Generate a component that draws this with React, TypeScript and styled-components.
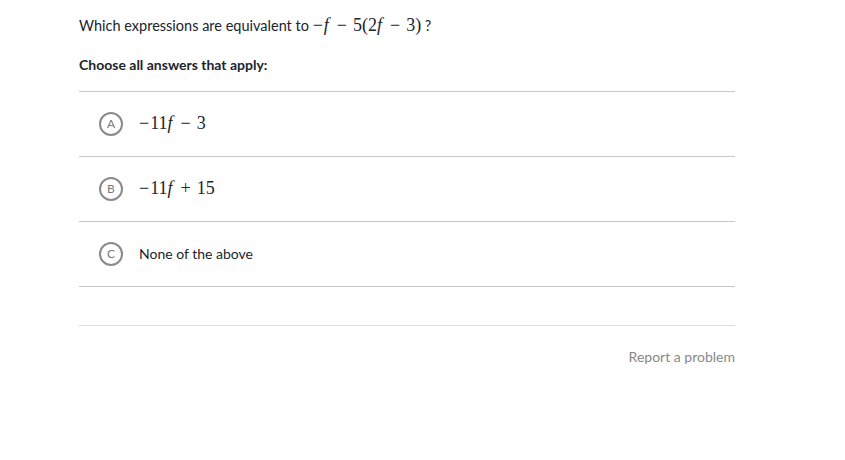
import styled, { createGlobalStyle } from 'styled-components'

const GlobalStyle = createGlobalStyle`
  body {
    margin: 0;
    background: #ffffff;
    font-family: Lato, "Noto Sans", sans-serif;
    color: #21242c;
  }
`

// a math token: 'v' = italic variable, 'u' = unary minus, 'b' = binary operator, 't' = plain text
type Token = [kind: 'v' | 'u' | 'b' | 't', text: string]

const options: { letter: string; math?: Token[]; text?: string }[] = [
  { letter: 'A', math: [['u', '−'], ['t', '11'], ['v', 'f'], ['b', '−'], ['t', '3']] },
  { letter: 'B', math: [['u', '−'], ['t', '11'], ['v', 'f'], ['b', '+'], ['t', '15']] },
  { letter: 'C', text: 'None of the above' },
]

const questionMath: Token[] = [
  ['u', '−'],
  ['v', 'f'],
  ['b', '−'],
  ['t', '5(2'],
  ['v', 'f'],
  ['b', '−'],
  ['t', '3)'],
]

const Math = ({ tokens }: { tokens: Token[] }) => (
  <MathText>
    {tokens.map(([kind, text], i) => {
      if (kind === 'v') return <Var key={i}>{text}</Var>
      if (kind === 'u') return <Unary key={i}>{text}</Unary>
      if (kind === 'b') return <BinOp key={i}>{text}</BinOp>
      return <span key={i}>{text}</span>
    })}
  </MathText>
)

const App = () => {
  return (
    <>
      <GlobalStyle />
      <Page>
        <Question>
          Which expressions are equivalent to <Math tokens={questionMath} /> ?
        </Question>
        <Instructions>Choose all answers that apply:</Instructions>
        <OptionList>
          {options.map((o) => (
            <OptionRow key={o.letter}>
              <LetterCircle>{o.letter}</LetterCircle>
              {o.math ? <Math tokens={o.math} /> : <PlainText>{o.text}</PlainText>}
            </OptionRow>
          ))}
        </OptionList>
        <Footer>
          <ReportLink>Report a problem</ReportLink>
        </Footer>
      </Page>
    </>
  )
}

export default App

const Page = styled.div`
  width: 656px;
  padding: 15px 0 0 79px;
`
const Question = styled.div`
  height: 20px;
  font-size: 14.5px;
  line-height: 20px;
  color: #21242c;
`
const Instructions = styled.div`
  margin-top: 20px;
  font-size: 14px;
  font-weight: 700;
  line-height: 20px;
  color: #21242c;
`
const OptionList = styled.div`
  margin-top: 16px;
  border-top: 1px solid #c8c8c8;
`
const OptionRow = styled.div`
  display: flex;
  align-items: center;
  height: 65px;
  padding: 0 0 1px 20px;
  box-sizing: border-box;
  border-bottom: 1px solid #c8c8c8;
`
const LetterCircle = styled.div`
  display: flex;
  justify-content: center;
  align-items: center;
  width: 20px;
  height: 20px;
  margin-right: 16px;
  border: 2px solid #8a8a8a;
  border-radius: 50%;
  font-size: 12px;
  color: #7a7a7a;
`
const MathText = styled.span`
  font-family: "Liberation Serif", "DejaVu Serif", serif;
  font-size: 18px;
  white-space: nowrap;
  color: #21242c;
`
const Var = styled.i`
  font-style: italic;
  padding-right: 2px;
`
const Unary = styled.span`
  margin-right: 1px;
`
const BinOp = styled.span`
  margin: 0 6px;
`
const PlainText = styled.span`
  font-size: 14px;
  color: #21242c;
`
const Footer = styled.div`
  display: flex;
  justify-content: flex-end;
  margin-top: 38px;
  padding-top: 22px;
  border-top: 1px solid #dcdcdc;
`
const ReportLink = styled.span`
  font-size: 14px;
  color: #888888;
`
